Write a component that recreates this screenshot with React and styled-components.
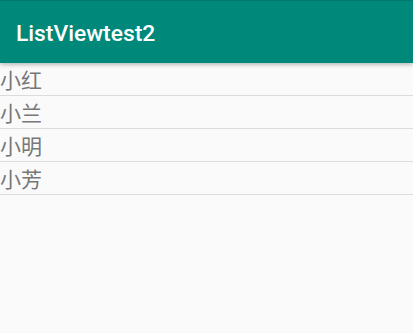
import React from 'react';
import styled, { createGlobalStyle } from 'styled-components';

const names = ['小红', '小兰', '小明', '小芳'];

const GlobalStyle = createGlobalStyle`
  html, body {
    margin: 0;
    padding: 0;
    background: #fafafa;
    font-family: Roboto, "Noto Sans CJK SC", sans-serif;
  }
`;

export default function App() {
  return (
    <Screen>
      <GlobalStyle />
      <Toolbar>
        <Title>ListViewtest2</Title>
      </Toolbar>
      <List>
        {names.map(name => (
          <Row key={name}>{name}</Row>
        ))}
      </List>
    </Screen>
  );
}

const Screen = styled.div`
  width: 413px;
  height: 333px;
  background: #fafafa;
  display: flex;
  flex-direction: column;
`;

const Toolbar = styled.div`
  height: 63px;
  background: #00887a;
  border-top: 1px solid #00796b;
  box-sizing: border-box;
  display: flex;
  align-items: center;
  padding: 0 16px;
  box-shadow: 0 2px 4px rgba(0, 0, 0, 0.25);
  position: relative;
  z-index: 1;
`;

const Title = styled.div`
  color: #ffffff;
  font-size: 22.8px;
  font-weight: 500;
  margin-top: 2px;
`;

const List = styled.div`
  display: flex;
  flex-direction: column;
`;

const Row = styled.div`
  height: 32px;
  border-bottom: 1px solid #dcdcdc;
  display: flex;
  align-items: center;
  font-family: "Noto Sans CJK SC", sans-serif;
  font-size: 21px;
  font-weight: 400;
  color: #777777;
  line-height: 1;
`;
